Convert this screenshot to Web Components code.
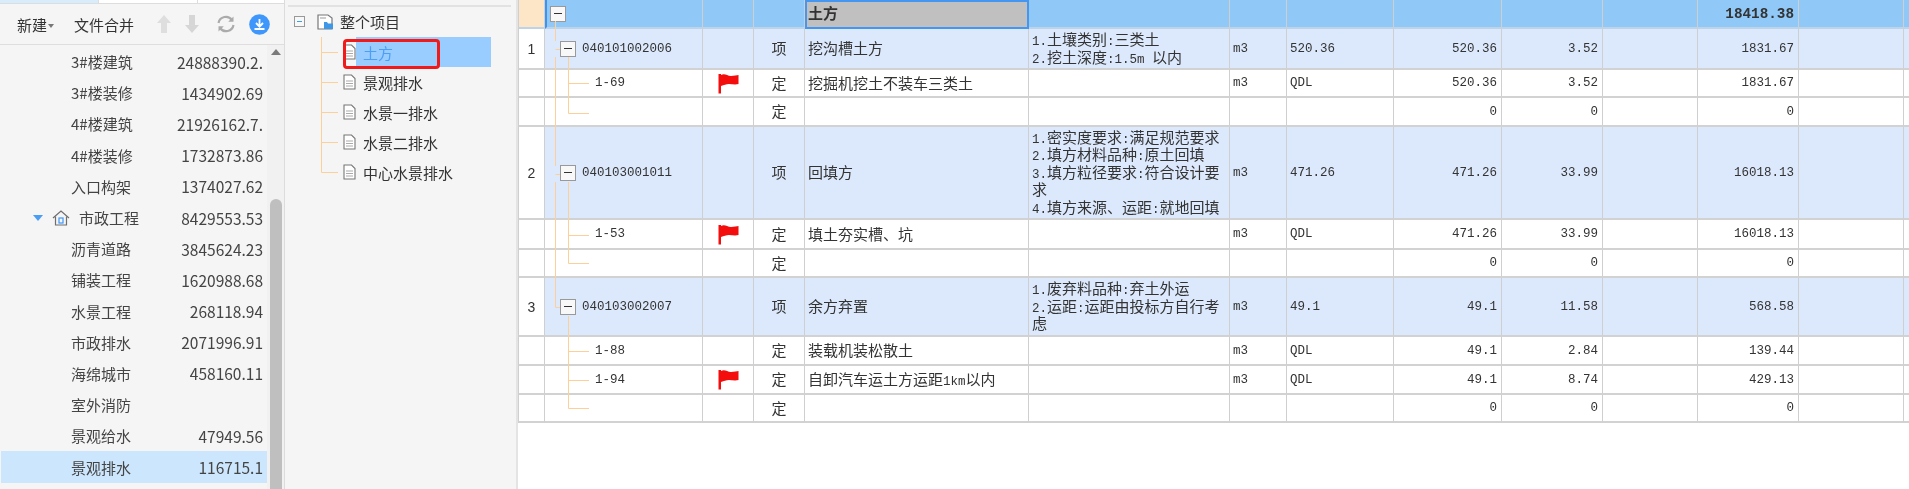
<!DOCTYPE html>
<html lang="zh">
<head>
<meta charset="utf-8">
<title>工程量清单</title>
<style>
    html, body { margin: 0; height: 100%; background: #fff; }
    body { font-family: "Noto Sans CJK SC", "Liberation Sans", sans-serif; }
</style>
</head>
<body>
<app-shell>
    <file-panel></file-panel>
    <project-tree></project-tree>
    <boq-table></boq-table>
</app-shell>

<script>
class AppShell extends HTMLElement {
    constructor() {
        super();
        this.attachShadow({ mode: 'open' });
        this.shadowRoot.innerHTML = `
            <style>
                :host {
                    display: flex;
                    width: 1909px;
                    height: 489px;
                    overflow: hidden;
                    filter: blur(.35px);
                }
            </style>
            <slot></slot>
        `;
    }
}

class FilePanel extends HTMLElement {
    constructor() {
        super();
        this.attachShadow({ mode: 'open' });
        this._rows = [
            ['3#楼建筑', '24888390.2.'],
            ['3#楼装修', '1434902.69'],
            ['4#楼建筑', '21926162.7.'],
            ['4#楼装修', '1732873.86'],
            ['入口构架', '1374027.62'],
            ['市政工程', '8429553.53', 'group'],
            ['沥青道路', '3845624.23'],
            ['铺装工程', '1620988.68'],
            ['水景工程', '268118.94'],
            ['市政排水', '2071996.91'],
            ['海绵城市', '458160.11'],
            ['室外消防', ''],
            ['景观给水', '47949.56'],
            ['景观排水', '116715.1', 'active']
        ];
    }

    connectedCallback() {
        this.render();
    }

    render() {
        this.shadowRoot.innerHTML = `
            <style>
                :host {
                    display: flex;
                    flex-direction: column;
                    flex: none;
                    box-sizing: border-box;
                    width: 285px;
                    height: 489px;
                    background: #f5f5f5;
                    border-right: 1px solid #dcdcdc;
                    font-size: 15px;
                    color: #444;
                }
                .tabs {
                    display: grid;
                    grid-template-columns: 98px 99px 87px;
                    height: 3px;
                    border-bottom: 1px solid #ddd;
                }
                .tabs i:first-child { background: #d8ecfb; }
                .tabs i:nth-child(2) { background: #fff; border-left: 1px solid #ddd; }
                .tabs i:nth-child(3) { background: #fff; border-left: 1px solid #ddd; }
                .toolbar {
                    display: flex;
                    align-items: center;
                    padding-left: 17px;
                    border-bottom: 1px solid #dedede;
                    color: #333;
                    box-sizing: border-box;
                    flex: none;
                    height: 41px;
                }
                .caret {
                    width: 0;
                    height: 0;
                    margin: 3px 0 0 1px;
                    border: 3px solid transparent;
                    border-top: 4px solid #777;
                    border-bottom: 0;
                }
                .merge { margin-left: 20px; }
                .toolbar svg { flex: none; display: block; }
                .body {
                    display: flex;
                    flex: 1;
                    min-height: 0;
                }
                .list {
                    width: 266px;
                    margin-left: 1px;
                    flex: none;
                    padding-top: 1px;
                }
                .row {
                    display: flex;
                    align-items: center;
                    justify-content: space-between;
                    height: 31.2px;
                    padding: 0 4px 0 70px;
                    white-space: nowrap;
                }
                .row.active { background: #cce6fd; }
                .name { display: flex; align-items: center; }
                .group { padding-left: 32px; }
                .group .arrow {
                    width: 0;
                    height: 0;
                    border: 5px solid transparent;
                    border-top: 6px solid #4a9df5;
                    border-bottom: 0;
                    margin-right: 9px;
                }
                .group svg { margin-right: 9px; }
                .num { font-size: 15.5px; }
                .scroll {
                    display: flex;
                    flex-direction: column;
                    align-items: center;
                    flex: 1;
                    background: #f1f1f1;
                }
                .up {
                    width: 0;
                    height: 0;
                    margin-top: 4px;
                    border: 5px solid transparent;
                    border-bottom: 6px solid #7a7a7a;
                    border-top: 0;
                }
                .thumb {
                    margin-top: auto;
                    width: 12px;
                    height: 290px;
                    border-radius: 6px 6px 0 0;
                    background: #bfbfbf;
                }
            </style>
            <div class="tabs"><i></i><i></i><i></i></div>
            <div class="toolbar">
                <span>新建</span><span class="caret"></span>
                <span class="merge">文件合并</span>
                <svg style="margin-left:22px" width="16" height="20" viewBox="0 0 16 20"><path d="M8 1 L15 9 H11 V19 H5 V9 H1 Z" fill="#dedede"/></svg>
                <svg style="margin-left:12px" width="16" height="20" viewBox="0 0 16 20"><path d="M8 19 L15 11 H11 V1 H5 V11 H1 Z" fill="#d6d6d6"/></svg>
                <svg style="margin-left:16px" width="20" height="18" viewBox="0 0 20 18" fill="none" stroke="#ababab" stroke-width="2.2"><path d="M2.5 8 A7.5 7.5 0 0 1 16 5"/><path d="M17.5 10 A7.5 7.5 0 0 1 4 13"/><path d="M17.5 1.5 V6.8 H12.2 Z" fill="#ababab" stroke="none"/><path d="M2.5 16.5 V11.2 H7.8 Z" fill="#ababab" stroke="none"/></svg>
                <svg style="margin-left:13px" width="21" height="21" viewBox="0 0 21 21"><circle cx="10.5" cy="10.5" r="10.3" fill="#3f97fb"/><path d="M10.5 5 V12 M7 9 L10.5 12.6 L14 9 M5.5 15 H15.5" fill="none" stroke="#fff" stroke-width="1.8"/></svg>
            </div>
            <div class="body">
                <div class="list">
                    ${this._rows.map(([name, num, kind]) => `
                        <div class="row ${kind || ''}">
                            <span class="name">
                                ${kind === 'group' ? `
                                    <span class="arrow"></span>
                                    <svg width="18" height="16" viewBox="0 0 18 16" fill="none" stroke="#6e6e6e" stroke-width="1.2"><path d="M1 8 L9 1 L17 8"/><path d="M3.5 6.5 V15 H14.5 V6.5"/><rect x="7" y="8" width="4" height="5" stroke="#3f97fb"/></svg>
                                ` : ''}
                                ${name}
                            </span>
                            <span class="num">${num}</span>
                        </div>
                    `).join('')}
                </div>
                <div class="scroll"><span class="up"></span><span class="thumb"></span></div>
            </div>
        `;
    }
}

class ProjectTree extends HTMLElement {
    constructor() {
        super();
        this.attachShadow({ mode: 'open' });
        this._items = ['土方', '景观排水', '水景一排水', '水景二排水', '中心水景排水'];
    }

    connectedCallback() {
        this.render();
    }

    fileIcon() {
        return `<svg width="13" height="16" viewBox="0 0 13 16" fill="#fff" stroke="#777" stroke-width="1.1"><path d="M1 1 H8.5 L12 4.5 V15 H1 Z"/><path d="M3 7 H10 M3 9.5 H10 M3 12 H10" stroke="#aaa"/></svg>`;
    }

    render() {
        this.shadowRoot.innerHTML = `
            <style>
                :host {
                    display: block;
                    position: relative;
                    flex: none;
                    box-sizing: border-box;
                    width: 233px;
                    height: 489px;
                    padding: 5px 5px 0 3px;
                    background: #f5f5f5;
                    border-right: 2px solid #e4e4e4;
                    font-size: 15px;
                    color: #333;
                }
                .rule { height: 2px; background: #e2e2e2; }
                .root {
                    display: flex;
                    align-items: center;
                    height: 29px;
                    padding-left: 6px;
                }
                .toggle {
                    box-sizing: border-box;
                    display: flex;
                    align-items: center;
                    justify-content: center;
                    width: 11px;
                    height: 11px;
                    border: 1px solid #999;
                    margin-right: 12px;
                    background: #f8f8f8;
                }
                .toggle::before { content: ""; width: 5px; height: 1px; background: #3aa0e8; }
                .root svg { margin-right: 6px; }
                ul {
                    list-style: none;
                    margin: 0;
                    padding: 1px 0 0 55px;
                }
                li {
                    display: flex;
                    align-items: center;
                    gap: 7px;
                    height: 30px;
                }
                li.active span {
                    display: flex;
                    align-items: center;
                    width: 128px;
                    height: 30px;
                    margin-left: -7px;
                    padding-left: 7px;
                    background: #99ccff;
                    color: #4d9ef5;
                }
                .lines { position: absolute; left: 0; top: 0; }
                .mark {
                    position: absolute;
                    left: 58px;
                    top: 39px;
                    box-sizing: border-box;
                    width: 97px;
                    height: 30px;
                    border: 3px solid #f01a1a;
                    border-radius: 4px;
                }
            </style>
            <div class="rule"></div>
            <div class="root">
                <span class="toggle"></span>
                <svg width="17" height="16" viewBox="0 0 17 16" fill="none"><path d="M1 1 H11 L15 4 V15 H1 Z" fill="#fff" stroke="#777" stroke-width="1.2"/><path d="M7 8 H10 L11 9.5 H16 V15 H7 Z" fill="#3f97e8"/><path d="M3 4 H9" stroke="#999"/></svg>
                <span>整个项目</span>
            </div>
            <ul>
                ${this._items.map((item, i) => `
                    <li class="${i === 0 ? 'active' : ''}">${this.fileIcon()}<span>${item}</span></li>
                `).join('')}
            </ul>
            <svg class="lines" width="60" height="180" fill="none" stroke="#fdd09a"><path d="M36.5 37 V172.5 H53 M36.5 52.5 H53 M36.5 82.5 H53 M36.5 112.5 H53 M36.5 142.5 H53"/></svg>
            <div class="mark"></div>
        `;
    }
}

const COLS = '26px 158px 51px 51px 224px 201px 57px 107px 108px 101px 95px 101px 105px 1fr';

class BoqTable extends HTMLElement {
    constructor() {
        super();
        this.attachShadow({ mode: 'open' });
        this._rows = [
            { h: 29, kind: 'head', name: '土方', total: '18418.38' },
            { h: 41, kind: 'item', no: '1', code: '040101002006', type: '项', name: '挖沟槽土方', desc: '1.土壤类别:三类土\n2.挖土深度:1.5m 以内', unit: 'm3', expr: '520.36', qty: '520.36', price: '3.52', total: '1831.67' },
            { h: 28, kind: 'sub', code: '1-69', flag: true, type: '定', name: '挖掘机挖土不装车三类土', unit: 'm3', expr: 'QDL', qty: '520.36', price: '3.52', total: '1831.67' },
            { h: 29, kind: 'sub', type: '定', qty: '0', price: '0', total: '0' },
            { h: 93, kind: 'item', no: '2', code: '040103001011', type: '项', name: '回填方', desc: '1.密实度要求:满足规范要求\n2.填方材料品种:原土回填\n3.填方粒径要求:符合设计要\n求\n4.填方来源、运距:就地回填', unit: 'm3', expr: '471.26', qty: '471.26', price: '33.99', total: '16018.13' },
            { h: 30, kind: 'sub', code: '1-53', flag: true, type: '定', name: '填土夯实槽、坑', unit: 'm3', expr: 'QDL', qty: '471.26', price: '33.99', total: '16018.13' },
            { h: 28, kind: 'sub', type: '定', qty: '0', price: '0', total: '0' },
            { h: 59, kind: 'item', no: '3', code: '040103002007', type: '项', name: '余方弃置', desc: '1.废弃料品种:弃土外运\n2.运距:运距由投标方自行考\n虑', unit: 'm3', expr: '49.1', qty: '49.1', price: '11.58', total: '568.58' },
            { h: 29, kind: 'sub', code: '1-88', type: '定', name: '装载机装松散土', unit: 'm3', expr: 'QDL', qty: '49.1', price: '2.84', total: '139.44' },
            { h: 29, kind: 'sub', code: '1-94', flag: true, type: '定', name: '自卸汽车运土方运距1km以内', unit: 'm3', expr: 'QDL', qty: '49.1', price: '8.74', total: '429.13' },
            { h: 28, kind: 'sub', type: '定', qty: '0', price: '0', total: '0' }
        ];
    }

    connectedCallback() {
        this.render();
    }

    // latin runs are half width in the original font
    mix(text) {
        return (text || '').replace(/[\x21-\x7e ]+/g, m => `<span class="n">${m}</span>`);
    }

    renderRow(r) {
        const toggle = '<span class="box"></span>';
        let tree = '';
        if (r.kind === 'head') tree = `<div class="tree lvl0">${toggle}</div>`;
        if (r.kind === 'item') tree = `<div class="tree lvl1">${toggle}<span class="n">${r.code}</span></div>`;
        if (r.kind === 'sub') tree = `<div class="tree lvl2"><span class="n">${r.code || ''}</span></div>`;
        const flag = r.flag
            ? '<svg width="21" height="21" viewBox="0 0 21 21"><path d="M0.5 1 H3 V20.5 H0.5 Z" fill="#f30d0d"/><path d="M3 2 C7 0 9 3 13 3 C16 3 19 2 20.5 2 V11 C17 12 14 11 11 11 C8 11 6 12 3 13 Z" fill="#f30d0d"/></svg>'
            : '';
        return `
            <div class="row ${r.kind}" style="height:${r.h}px">
                <div class="c no">${r.no || ''}</div>
                ${tree}
                <div class="c mid">${flag}</div>
                <div class="c mid"><span class="cjk">${r.type || ''}</span></div>
                <div class="c name"><span class="cjk">${this.mix(r.name)}</span></div>
                <div class="c desc"><div class="cjk">${this.mix(r.desc)}</div></div>
                <div class="c"><span class="n">${r.unit || ''}</span></div>
                <div class="c"><span class="n">${r.expr || ''}</span></div>
                <div class="c right"><span class="n">${r.qty || ''}</span></div>
                <div class="c right"><span class="n">${r.price || ''}</span></div>
                <div class="c"></div>
                <div class="c right"><span class="n total">${r.total || ''}</span></div>
                <div class="c"></div>
                <div class="c"></div>
            </div>
        `;
    }

    render() {
        this.shadowRoot.innerHTML = `
            <style>
                :host {
                    display: block;
                    position: relative;
                    flex: 1;
                    min-width: 0;
                    background: #fff;
                    font-size: 15px;
                    color: #333;
                }
                .row {
                    display: grid;
                    grid-template-columns: ${COLS};
                    grid-template-rows: 100%;
                    box-sizing: border-box;
                }
                .c, .tree {
                    display: flex;
                    align-items: center;
                    box-sizing: border-box;
                    min-width: 0;
                    padding: 0 3px;
                    border-right: 1px solid #cfcfcf;
                    border-bottom: 2px solid #d2d2d2;
                    white-space: nowrap;
                    overflow: hidden;
                }
                .n { font-family: "Liberation Mono", monospace; font-size: 12.5px; }
                .cjk { position: relative; top: -1px; }
                .no, .mid { justify-content: center; padding: 0; }
                .no { font-family: "Liberation Sans", sans-serif; font-size: 14px; }
                .right { justify-content: flex-end; padding-right: 4px; }
                .desc > div { white-space: pre-line; line-height: 17.4px; }
                .desc .n { line-height: 0; }
                .tree { padding: 0; gap: 6px; }
                .lvl0 { padding-left: 3px; }
                .lvl1 { padding-left: 15px; }
                .lvl2 { padding-left: 50px; }
                .box {
                    box-sizing: border-box;
                    display: flex;
                    align-items: center;
                    justify-content: center;
                    width: 16px;
                    height: 16px;
                    flex: none;
                    border: 1px solid #999;
                    background: #f8f8f8;
                }
                .box::before { content: ""; width: 8px; height: 1.5px; background: #333; }
                .head .c, .head .tree { background: #90c8f8; border-bottom-color: #bcd3e8; }
                .head .c.no { background: #fde6c8; }
                .head .tree { border-left: 2px solid #3f93f0; }
                .head .c.name {
                    background: #c0c0c0;
                    outline: 2px solid #4496f0;
                    outline-offset: -2px;
                    font-weight: 700;
                }
                .head .total { font-weight: 700; font-size: 14.3px; }
                .item .tree, .item .c:not(.no) { background: #dce9fc; }
                .lines { position: absolute; left: 0; top: 0; pointer-events: none; }
                .table { border-left: 1px solid #cfcfcf; }
            </style>
            <div class="table">
                ${this._rows.map(r => this.renderRow(r)).join('')}
            </div>
            <svg class="lines" width="80" height="424" fill="none" stroke="#fdd09a"><path d="M37.5 21 V41 M37.5 57 V166 M37.5 182 V307.5 H42 M37.5 49.5 H42 M37.5 174.5 H42"/><path d="M50.5 57 V113.5 H71 M50.5 83.5 H71"/><path d="M50.5 182 V263.5 H71 M50.5 235.5 H71"/><path d="M50.5 316 V408.5 H71 M50.5 351.5 H71 M50.5 380.5 H71"/></svg>
        `;
    }
}

customElements.define('app-shell', AppShell);
customElements.define('file-panel', FilePanel);
customElements.define('project-tree', ProjectTree);
customElements.define('boq-table', BoqTable);
</script>
</body>
</html>
